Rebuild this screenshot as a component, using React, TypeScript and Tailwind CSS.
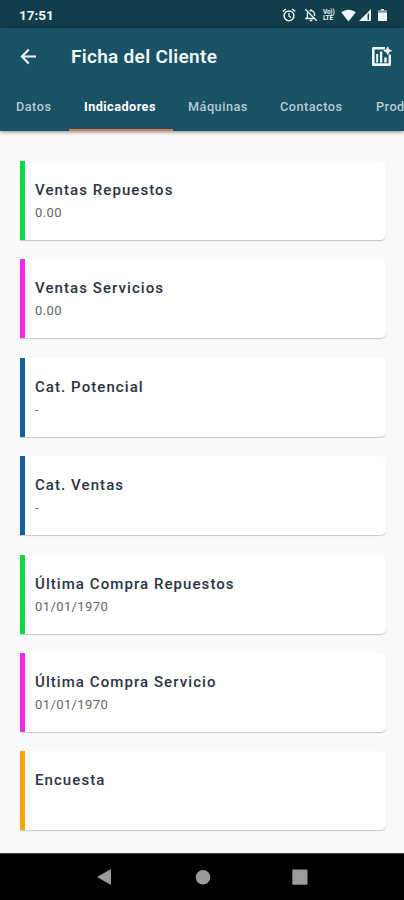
type Indicador = {
  titulo: string;
  valor: string;
  color: string;
};

const indicadores: Indicador[] = [
  { titulo: "Ventas Repuestos", valor: "0.00", color: "border-[#0cd744]" },
  { titulo: "Ventas Servicios", valor: "0.00", color: "border-[#f32bea]" },
  { titulo: "Cat. Potencial", valor: "-", color: "border-[#13629f]" },
  { titulo: "Cat. Ventas", valor: "-", color: "border-[#13629f]" },
  {
    titulo: "Última Compra Repuestos",
    valor: "01/01/1970",
    color: "border-[#0cd744]",
  },
  {
    titulo: "Última Compra Servicio",
    valor: "01/01/1970",
    color: "border-[#f32bea]",
  },
  { titulo: "Encuesta", valor: "", color: "border-[#f9a311]" },
];

const tabs = [
  { nombre: "Datos", ancho: "w-[69px] pl-4" },
  { nombre: "Indicadores", ancho: "w-[104px] pl-[15px]" },
  { nombre: "Máquinas", ancho: "w-[92px] pl-[15px]" },
  { nombre: "Contactos", ancho: "w-[95px] pl-[15px]" },
  { nombre: "Prod", ancho: "w-[44px] pl-4" },
];

function AlarmIcon() {
  return (
    <svg
      className="mr-[8px] size-[14px]"
      viewBox="0 0 14 14"
      fill="none"
      stroke="currentColor"
      strokeWidth="1.5"
    >
      <circle cx="7" cy="7.8" r="4.9" />
      <path d="M7 5v3.2l2 1.2M0.8 3.5L3.8 1M13.2 3.5L10.2 1" strokeWidth="1.3" />
    </svg>
  );
}

function BellOffIcon() {
  return (
    <svg
      className="mr-[5px] size-[14px]"
      viewBox="0 0 14 14"
      fill="none"
      stroke="currentColor"
      strokeWidth="1.3"
    >
      <path d="M1.3 1.3l11.4 11.4" />
      <path d="M3.6 4.6C3.3 5.6 3.4 7 3.4 8.8L2 10.5h8.2M5.3 3C8.200 1.900 10.500 3.700 10.500 6.500v1.600" />
      <path d="M7 1.200v1.500M5.700 12.600h2.600" strokeWidth="1.5" />
    </svg>
  );
}

function StatusBar() {
  return (
    <div className="flex h-7 items-center bg-[#123d4b] pr-[17px] pl-[19px] pt-[2px] text-[#eef6f8]">
      <span className="flex-1 text-[13.5px] font-bold leading-4">17:51</span>
      <AlarmIcon />
      <BellOffIcon />
      <div className="mr-[3px] flex w-[15px] flex-col text-[6.5px] font-bold leading-none tracking-[-0.2px]">
        <span>Vo))</span>
        <span>LTE</span>
      </div>
      <svg className="mr-[3px] h-[13px] w-[15px]" viewBox="0 0 15 13">
        <path d="M0.2 3.2C4.5-0.2 10.5-0.2 14.8 3.2L7.5 12.5z" fill="currentColor" />
      </svg>
      <svg className="mr-[7px] h-[12px] w-[12px]" viewBox="0 0 12 12">
        <path d="M12 0V12H0z" fill="currentColor" />
        <path d="M9.3 4.5v6.3" stroke="#123d4b" strokeWidth="1.4" />
      </svg>
      <svg className="h-[12px] w-[9px]" viewBox="0 0 9 12">
        <path d="M3 0h3v1.5h3V12H0V1.5h3z" fill="currentColor" />
        <path d="M0 1.5h9v2.200H0z" fill="#7e99a2" />
      </svg>
    </div>
  );
}

function BackIcon() {
  return (
    <svg
      className="size-[21px]"
      viewBox="0 0 21 21"
      fill="none"
      stroke="currentColor"
      strokeWidth="2.1"
    >
      <path d="M18 10.500H4.200M10.800 3.600L3.900 10.500l6.900 6.900" />
    </svg>
  );
}

function ChartBoxPlusIcon() {
  return (
    <svg className="h-[21px] w-[21px]" viewBox="0 0 21 21" fill="currentColor">
      <path d="M14 1H2.5C1.5 1 1 1.6 1 2.5v16c0 1 .6 1.5 1.5 1.5h16c1 0 1.5-.6 1.5-1.5V8.5h-2.4v8.7H3.6V3.6H14z" />
      <path d="M5.2 8h2v8.4h-2zM9 5.6h2.3v10.8H9zM13.2 11.5h2.6v4.9h-2.6z" />
      <path
        d="M16.7 0.8l1.2 2.7 2.7 1.2-2.7 1.2-1.2 2.7-1.2-2.7-2.7-1.2 2.7-1.2z"
        stroke="currentColor"
        strokeWidth="0.8"
      />
    </svg>
  );
}

function Tabs() {
  return (
    <nav className="flex h-[46px] overflow-hidden text-[12.7px] font-medium">
      {tabs.map((tab) => {
        const activo = tab.nombre === "Indicadores";
        return (
          <div
            key={tab.nombre}
            className={`shrink-0 border-b-2 pt-[14px] leading-4 ${tab.ancho} ${
              activo
                ? "border-[#d27a50] font-bold tracking-[0.45px] text-white"
                : "border-transparent tracking-[0.5px] text-[#b4cbd3]"
            }`}
          >
            {tab.nombre}
          </div>
        );
      })}
    </nav>
  );
}

function Tarjeta({ titulo, valor, color }: Indicador) {
  return (
    <article
      className={`h-[79px] rounded-r-[5px] border-l-[5px] bg-white pt-[20px] pl-[10px] shadow-[0_1px_1px_rgba(0,0,0,0.2)] ${color}`}
    >
      <h2 className="text-[15px] font-medium leading-[18px] tracking-[1.07px] text-[#2b3445]">
        {titulo}
      </h2>
      <p className="mt-[6px] text-[13px] leading-4 tracking-[0.4px] text-[#666]">
        {valor}
      </p>
    </article>
  );
}

function NavigationBar() {
  return (
    <div className="h-[47px] border-t border-[#444] bg-black">
      <svg className="h-[46px] w-[404px]" viewBox="0 0 404 46" fill="#9b9b9b">
        <path d="M97 23l14-8v16z" />
        <circle cx="203" cy="23.3" r="7.2" />
        <rect x="292.3" y="15.5" width="15.2" height="15.2" rx="1" />
      </svg>
    </div>
  );
}

export default function App() {
  return (
    <div className="flex h-[900px] w-[404px] flex-col overflow-hidden bg-[#fafafa] font-['Roboto',sans-serif]">
      <StatusBar />
      <header className="h-[103px] bg-[#195264] text-[#f2f8fa] shadow-[0_1px_4px_rgba(0,0,0,0.45)]">
        <div className="flex h-[57px] items-center pr-[12.5px] pl-[17.5px]">
          <BackIcon />
          <h1 className="ml-[32.5px] flex-1 pt-px text-[19px] font-semibold tracking-[0.3px]">
            Ficha del Cliente
          </h1>
          <ChartBoxPlusIcon />
        </div>
        <Tabs />
      </header>
      <main className="flex flex-1 flex-col gap-[19.4px] pt-[30px] pr-[18.5px] pl-5">
        {indicadores.map((indicador) => (
          <Tarjeta key={indicador.titulo} {...indicador} />
        ))}
      </main>
      <NavigationBar />
    </div>
  );
}
